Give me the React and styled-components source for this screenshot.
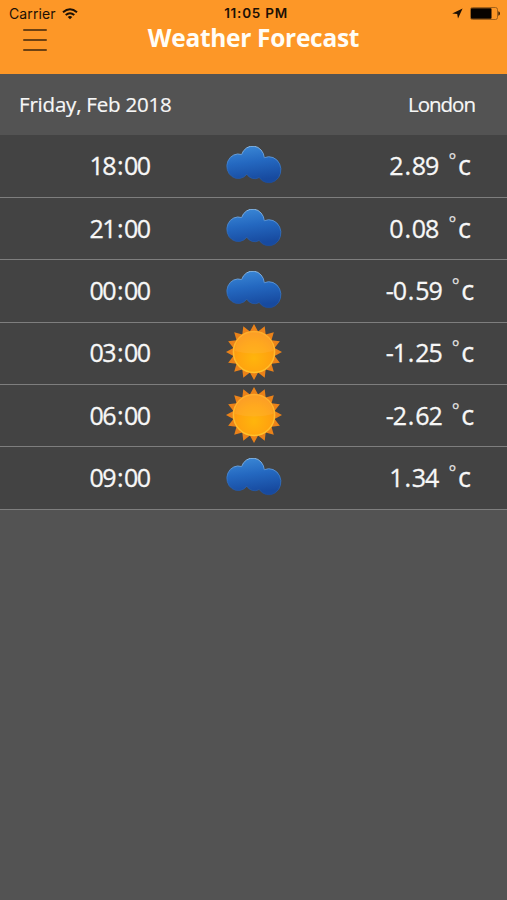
import React from 'react'
import styled, { createGlobalStyle } from 'styled-components'

const GlobalStyle = createGlobalStyle`
    * {
        box-sizing: border-box;
    }
    body {
        margin: 0;
        background: #535353;
    }
`
const Screen = styled.div`
    min-height: 900px;
    background: #535353;
    color: #f7f7f7;
    font-family: 'Open Sans', 'Noto Sans', sans-serif;
    white-space: nowrap;
`
const Header = styled.header`
    height: 74px;
    background: #fd9727;
`
const StatusBar = styled.div`
    height: 27px;
    padding: 0 7px 0 9px;
    display: grid;
    grid-template-columns: 1fr auto 1fr;
    align-items: center;
    color: #1c1005;
    font-family: Inter, sans-serif;
    font-size: 14px;
    line-height: 27px;
`
const Carrier = styled.div`
    display: flex;
    align-items: center;
    gap: 6px;
    letter-spacing: 0.1px;
`
const Clock = styled.div`
    font-size: 13.5px;
    font-weight: 600;
    letter-spacing: 0.75px;
    padding-left: 3px;
`
const Indicators = styled.div`
    display: flex;
    align-items: center;
    justify-content: flex-end;
    gap: 7px;
`
const TitleBar = styled.div`
    height: 47px;
    display: grid;
    grid-template-columns: 80px 1fr 80px;
`
const MenuButton = styled.button`
    width: 24px;
    height: 22px;
    margin: 2px 0 0 23px;
    padding: 0;
    border: 0;
    background: none;
    display: flex;
    flex-direction: column;
    justify-content: space-between;
`
const MenuLine = styled.span`
    height: 2px;
    width: 24px;
    border-radius: 1px;
    background: #6e4212;
`
const Title = styled.h1`
    margin: 0;
    color: #fffdf6;
    font-size: 24.5px;
    font-weight: 700;
    line-height: 22px;
    letter-spacing: -0.3px;
    text-align: center;
`
const DayBar = styled.div`
    height: 61px;
    padding: 0 32px 2px 19px;
    display: flex;
    align-items: center;
    justify-content: space-between;
    font-size: 20.5px;
    -webkit-text-stroke: 0.2px #f7f7f7;
`
const Day = styled.span`
    letter-spacing: -0.2px;
`
const City = styled.span`
    letter-spacing: -1px;
`
const List = styled.div`
    padding-top: 0.5px;
    background: #434343;
`
const Row = styled.div`
    height: 62.4px;
    padding-bottom: 2px;
    display: grid;
    grid-template-columns: repeat(3, 1fr);
    align-items: center;
    border-bottom: 1px solid #7e7e7e;
    font-size: 25px;
    line-height: 58px;
    -webkit-text-stroke: 0.3px #f7f7f7;
`
const Time = styled.div`
    padding-left: 70px;
    text-align: center;
    letter-spacing: -1.5px;
`
const Picture = styled.div`
    display: flex;
    justify-content: center;
`
const Temp = styled.div`
    padding-left: 14px;
    display: flex;
    justify-content: center;
    letter-spacing: -1.1px;
`
const Mark = styled.span`
    margin: 0 1.9px;
`
const Degree = styled.span`
    margin: 0 2.5px 0 10px;
    color: #d8d8d8;
    font-size: 28px;
    -webkit-text-stroke: 0;
`
const Unit = styled.span`
    font-size: 27px;
`

const Cloud = () => (
    <svg width="56" height="38" viewBox="2 3 56 35" preserveAspectRatio="none">
        <defs>
            <linearGradient id="cloud" x1="0" y1="0" x2="0.2" y2="1">
                <stop offset="0" stopColor="#3d8bd8" />
                <stop offset="0.5" stopColor="#2468c0" />
                <stop offset="1" stopColor="#174a9f" />
            </linearGradient>
            <linearGradient id="cloudEdge" x1="0" y1="0" x2="0" y2="1">
                <stop offset="0" stopColor="#91bfea" />
                <stop offset="0.5" stopColor="#3a7ccb" />
                <stop offset="1" stopColor="#1d4b96" />
            </linearGradient>
        </defs>
        <path
            d="M17.6 10.9 A11.7 11.7 0 0 1 40.3 13.8 A12 12 0 1 1 35.2 32 A9.5 9.5 0 0 1 22.8 29 A11.3 11.3 0 1 1 17.6 10.9 Z"
            fill="url(#cloud)"
            stroke="url(#cloudEdge)"
            strokeWidth="0.9"
        />
    </svg>
)

const rays = Array.from({ length: 32 }, (_, i) => {
    const r = i % 2 ? 21 : 28
    const a = (i * Math.PI) / 16 - Math.PI / 2
    return `${(28 + r * Math.cos(a)).toFixed(2)},${(28 + r * Math.sin(a)).toFixed(2)}`
}).join(' ')

const Sun = () => (
    <svg width="56" height="56" viewBox="0 0 56 56">
        <defs>
            <radialGradient id="sun" cx="0.5" cy="0.65" r="0.6">
                <stop offset="0" stopColor="#ffb50c" />
                <stop offset="0.65" stopColor="#ffa30f" />
                <stop offset="1" stopColor="#fb9518" />
            </radialGradient>
            <linearGradient id="sunRim" x1="0" y1="0" x2="0" y2="1">
                <stop offset="0" stopColor="#ffae2c" />
                <stop offset="1" stopColor="#ffc22c" />
            </linearGradient>
        </defs>
        <polygon points={rays} fill="#ea8219" />
        <circle cx="28" cy="28" r="20.6" fill="url(#sun)" stroke="url(#sunRim)" strokeWidth="1.5" />
        <path d="M9 27 A19 19 0 0 1 47 27 Q28 32 9 27 Z" fill="#ffb647" opacity="0.3" />
    </svg>
)

const WifiIcon = () => (
    <svg width="16" height="12" viewBox="0 0 16 12" fill="none" stroke="#1c1005" strokeWidth="2">
        <path d="M1 4.3 Q8 -1.8 15 4.3" />
        <path d="M3.7 7 Q8 3.4 12.3 7" />
        <path d="M5.7 8.9 Q8 7 10.3 8.9 L8 11.3 Z" fill="#1c1005" stroke="none" />
    </svg>
)

const LocationIcon = () => (
    <svg width="11" height="11" viewBox="0 0 11 11">
        <path d="M10.6 0.4 L6 10.6 L5.2 6 L0.2 5.4 Z" fill="#1c1005" />
    </svg>
)

const BatteryIcon = () => (
    <svg width="30" height="13" viewBox="0 0 30 13">
        <rect x="0.5" y="0.5" width="27" height="12" rx="2" fill="none" stroke="#8a5418" strokeWidth="0.8" />
        <rect x="1" y="1.2" width="20.5" height="10.6" rx="0.8" fill="#070300" />
        <path d="M28.3 4.2 Q30 4.7 30 6.5 Q30 8.3 28.3 8.8 Z" fill="#3a2106" />
    </svg>
)

const forecast = [
    { time: '18:00', sky: 'cloud', temp: '2.89' },
    { time: '21:00', sky: 'cloud', temp: '0.08' },
    { time: '00:00', sky: 'cloud', temp: '-0.59' },
    { time: '03:00', sky: 'sun', temp: '-1.25' },
    { time: '06:00', sky: 'sun', temp: '-2.62' },
    { time: '09:00', sky: 'cloud', temp: '1.34' }
]

const ForecastRow = ({ time, sky, temp }) => {
    const [hour, minute] = time.split(':')
    const [whole, decimal] = temp.split('.')
    return (
        <Row>
            <Time>{hour}<Mark>:</Mark>{minute}</Time>
            <Picture>{sky === 'sun' ? <Sun /> : <Cloud />}</Picture>
            <Temp>{whole}<Mark>.</Mark>{decimal}<Degree>˚</Degree><Unit>c</Unit></Temp>
        </Row>
    )
}

const App = () => {
    return (
        <>
            <GlobalStyle />
            <Screen>
                <Header>
                    <StatusBar>
                        <Carrier>Carrier <WifiIcon /></Carrier>
                        <Clock>11:05 PM</Clock>
                        <Indicators>
                            <LocationIcon />
                            <BatteryIcon />
                        </Indicators>
                    </StatusBar>
                    <TitleBar>
                        <MenuButton aria-label="Menu">
                            <MenuLine />
                            <MenuLine />
                            <MenuLine />
                        </MenuButton>
                        <Title>Weather Forecast</Title>
                    </TitleBar>
                </Header>
                <DayBar>
                    <Day>Friday, Feb 2018</Day>
                    <City>London</City>
                </DayBar>
                <List>
                    {forecast.map(item => <ForecastRow key={item.time} {...item} />)}
                </List>
            </Screen>
        </>
    )
}

export default App
